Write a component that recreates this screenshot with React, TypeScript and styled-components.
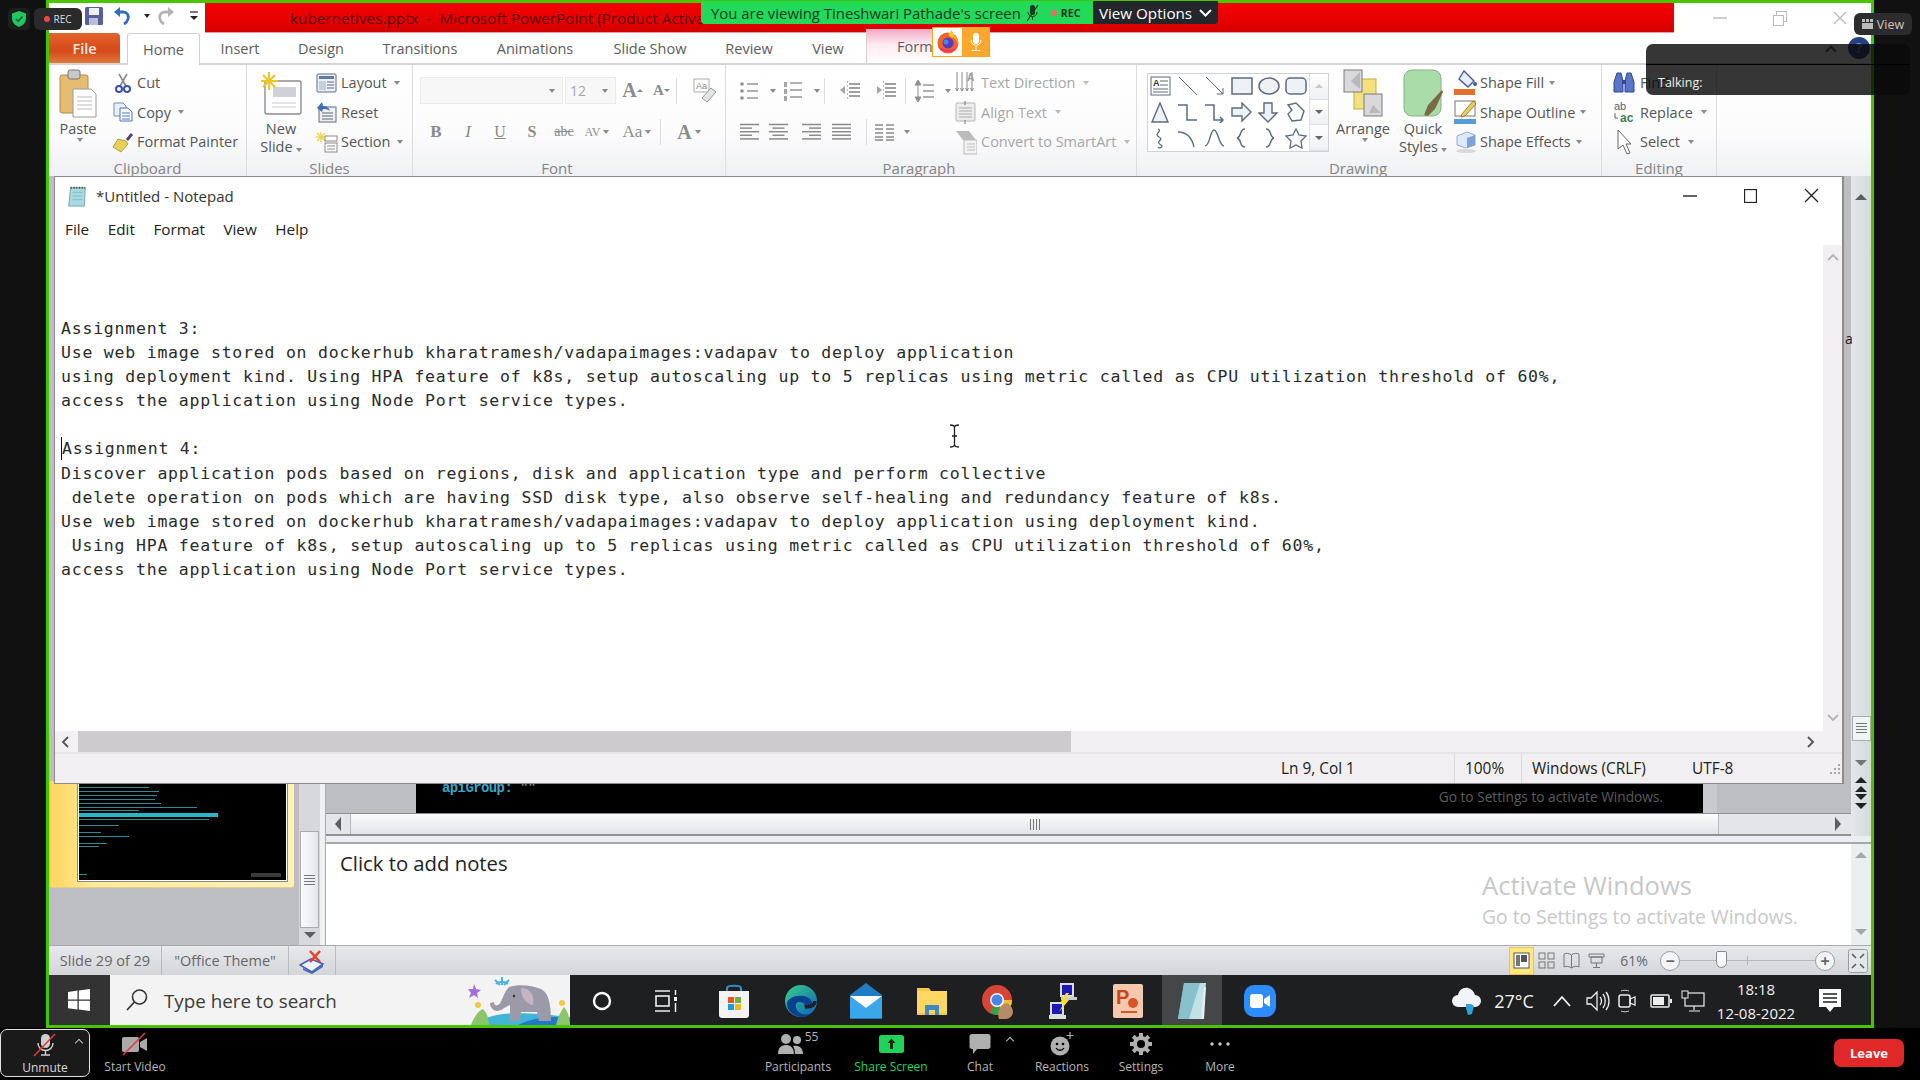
import React from 'react'
import styled, { createGlobalStyle } from 'styled-components'

const GlobalStyle = createGlobalStyle`
  html, body { margin: 0; padding: 0; background: #000; }
  * { box-sizing: border-box; }
  body { font-family: "Open Sans", "Liberation Sans", sans-serif; }
`

const UI_FONT = '"Open Sans", "Liberation Sans", sans-serif'

const Page = styled.div`
  position: relative;
  width: 1920px;
  height: 1080px;
  overflow: hidden;
  display: flex;
  flex-direction: column;
  background: #000;
  font-family: ${UI_FONT};
`

const Stage = styled.div`
  height: 1028px;
  padding: 0 46px;
  background: #111;
  display: flex;
`

const Shared = styled.div`
  position: relative;
  flex: 1;
  min-width: 0;
  border: 3px solid #48c400;
  display: flex;
  flex-direction: column;
  background: #fff;
`

/* powerpoint title bar */
const TitleBar = styled.div`
  height: 30px;
  display: flex;
  align-items: stretch;
  background: #fff;
`
const Qat = styled.div`
  width: 156px;
  display: flex;
  align-items: center;
  padding: 0 0 4px 36px;
`
const RedBar = styled.div`
  width: 1469px;
  padding: 0 0 0 85px;
  background: linear-gradient(#f40000, #e60000 60%, #d40000);
  color: #5c0000;
  font-size: 15.3px;
  white-space: pre;
  display: flex;
  align-items: center;
  border-bottom: 1px solid #e4a0a0;
`
const WinBtns = styled.div`
  flex: 1;
  display: flex;
  align-items: center;
  justify-content: flex-end;
  gap: 46px;
  padding-right: 24px;
`

/* ribbon tabs */
const TabStrip = styled.div`
  height: 32px;
  display: flex;
  align-items: stretch;
  border-bottom: 2px solid #d4d4d4;
  background: #fff;
`
const FileTab = styled.div`
  width: 71px;
  margin-right: 7px;
  background: linear-gradient(#e4622c, #d5491a 60%, #e27a3c);
  border-radius: 0 4px 0 0;
  color: #ffe9dc;
  font-size: 14.5px;
  font-weight: 600;
  display: flex;
  align-items: center;
  justify-content: center;
`
const Tab = styled.div<{ $w: number; $active?: boolean }>`
  width: ${(p) => p.$w}px;
  display: flex;
  align-items: center;
  justify-content: center;
  font-size: 14.5px;
  color: #5c5c5c;
  ${(p) =>
    p.$active &&
    `
    height: 32px;
    background: #fff;
    border: 1px solid #d0d0d0;
    border-bottom: 0;
    border-radius: 3px 3px 0 0;
  `}
`
const ContextTab = styled.div`
  width: 109px;
  margin-top: -4px;
  padding-left: 30px;
  display: flex;
  align-items: center;
  font-size: 14.5px;
  color: #5c5c5c;
  background: linear-gradient(#f3a9c4, #ffeaf2 45%, #fff);
  border-left: 1px solid #eec4d4;
`

/* ribbon */
const Ribbon = styled.div`
  height: 111px;
  display: flex;
  background: linear-gradient(#fff, #fcfcfd 60%, #eff0f3);
  color: #555;
  font-size: 14.5px;
`
const Group = styled.div<{ $w: number }>`
  width: ${(p) => p.$w}px;
  height: 111px;
  display: flex;
  flex-direction: column;
  border-right: 1px solid #dcdde0;
`
const GroupBody = styled.div<{ $pl?: number }>`
  flex: 1;
  display: flex;
  padding: 3px 0 0 ${(p) => p.$pl ?? 0}px;
  min-height: 0;
`
const GroupLabel = styled.div<{ $pr?: number }>`
  height: 17px;
  line-height: 18px;
  padding-right: ${(p) => p.$pr ?? 0}px;
  text-align: center;
  font-size: 15px;
  color: #858585;
`
const BigBtn = styled.div<{ $w: number }>`
  width: ${(p) => p.$w}px;
  display: flex;
  flex-direction: column;
  align-items: center;
  font-size: 14.5px;
  line-height: 18px;
  text-align: center;
  color: #555;
`
const BigIcon = styled.div`
  height: 51px;
  display: flex;
  align-items: center;
  justify-content: center;
  margin-bottom: 1px;
`
const SmallCol = styled.div<{ $ml?: number }>`
  margin-left: ${(p) => p.$ml ?? 0}px;
  display: flex;
  flex-direction: column;
`
const SmallRow = styled.div<{ $off?: boolean; $gap?: number }>`
  height: 29.5px;
  display: flex;
  align-items: center;
  gap: ${(p) => p.$gap ?? 4}px;
  white-space: nowrap;
  color: ${(p) => (p.$off ? '#a6a6a6' : '#555')};
`
const IconBox = styled.span<{ $w?: number }>`
  width: ${(p) => p.$w ?? 21}px;
  display: inline-flex;
  justify-content: center;
  align-items: center;
`
const Caret = styled.span<{ $c?: string }>`
  display: inline-block;
  width: 0;
  height: 0;
  margin-left: 3px;
  border-left: 3.5px solid transparent;
  border-right: 3.5px solid transparent;
  border-top: 4px solid ${(p) => p.$c ?? '#8a8a8a'};
`
const ToolStack = styled.div`
  display: flex;
  flex-direction: column;
`
const ToolRow = styled.div<{ $h: number }>`
  height: ${(p) => p.$h}px;
  display: flex;
  align-items: center;
`
const Slot = styled.span<{ $w: number }>`
  width: ${(p) => p.$w}px;
  display: inline-flex;
  align-items: center;
  justify-content: center;
  color: #8b8b8b;
`
const Sep = styled.span<{ $h?: number }>`
  width: 1px;
  height: ${(p) => p.$h ?? 26}px;
  background: #dcdde0;
`
const Combo = styled.div<{ $w: number }>`
  width: ${(p) => p.$w}px;
  height: 27px;
  margin-right: 2px;
  background: #f7f7f8;
  border: 1px solid #ebebed;
  display: flex;
  align-items: center;
  justify-content: flex-end;
  padding-right: 7px;
  color: #a5a5a5;
  font-size: 14px;
`
const ComboValue = styled.span`
  margin-right: auto;
  padding-left: 4px;
`
const FontGlyph = styled.span<{ $b?: boolean; $i?: boolean; $u?: boolean; $size?: number; $s?: boolean }>`
  font-family: "Liberation Serif", serif;
  font-weight: ${(p) => (p.$b ? 700 : 400)};
  font-style: ${(p) => (p.$i ? 'italic' : 'normal')};
  text-decoration: ${(p) => (p.$u ? 'underline' : p.$s ? 'line-through' : 'none')};
  font-size: ${(p) => p.$size ?? 15}px;
  color: #8b8b8b;
`
const Gallery = styled.div`
  width: 182px;
  height: 79px;
  margin: 5px 4px 0 10px;
  border: 1px solid #cfd2d8;
  background: #fff;
  display: flex;
`
const ShapeGrid = styled.div`
  flex: 1;
  display: grid;
  grid-template-columns: repeat(6, 1fr);
  grid-template-rows: repeat(3, 1fr);
  place-items: center;
`
const Spinner = styled.div`
  width: 19px;
  display: flex;
  flex-direction: column;
  border-left: 1px solid #dfe1e5;
`
const SpinCell = styled.div`
  flex: 1;
  display: flex;
  align-items: center;
  justify-content: center;
  background: linear-gradient(#fff, #eff0f3);
  border-bottom: 1px solid #dfe1e5;
`

/* slide pane + notes */
const Body = styled.div`
  flex: 1;
  min-height: 0;
  display: flex;
  background: #bdbec2;
`
const ThumbPane = styled.div`
  width: 271px;
  display: flex;
  align-items: flex-end;
`
const ThumbList = styled.div`
  flex: 1;
  padding: 0 0 57px 1px;
`
const ThumbHighlight = styled.div`
  width: 244px;
  height: 100%;
  padding: 0 7px 6px 28px;
  background: linear-gradient(90deg, #ffd65c, #ffe99b 18%, #fdf0bd);
  border-radius: 0 0 3px 3px;
  border-bottom: 1px solid #e2cf85;
`
const Thumb = styled.div`
  position: relative;
  width: 209px;
  height: 100px;
  padding-top: 4px;
  background: #000;
  border: 1px solid #fff;
  outline: 1px solid #8a8a80;
`
const ThumbLine = styled.div<{ $w: number; $mt: number; $bar?: boolean }>`
  width: ${(p) => p.$w}px;
  height: ${(p) => (p.$bar ? 4 : 1)}px;
  margin-top: ${(p) => p.$mt}px;
  background: ${(p) => (p.$bar ? '#2ab4c8' : '#2e8a92')};
`
const ThumbMark = styled.div`
  position: absolute;
  right: 5px;
  bottom: 3px;
  width: 30px;
  height: 4px;
  background: #3c3c3c;
`
const ThumbScroll = styled.div`
  width: 21px;
  height: 100%;
  margin-left: 4px;
  display: flex;
  flex-direction: column;
  justify-content: flex-end;
  align-items: center;
  padding: 0 1px 7px;
  background: #d6d8dc;
`
const ThumbGrip = styled.div`
  width: 19px;
  height: 97px;
  margin-bottom: 4px;
  border: 1px solid #a9abb0;
  background: linear-gradient(90deg, #fafbfc, #e4e6ea);
  display: flex;
  align-items: center;
  justify-content: center;
`
const Splitter = styled.div`
  width: 6px;
  background: #eef0f2;
  border-right: 1px solid #a8aaae;
`
const Main = styled.div`
  flex: 1;
  min-width: 0;
  display: flex;
  flex-direction: column;
`
const MainTop = styled.div`
  flex: 1;
  min-height: 0;
  display: flex;
`
const SlideCol = styled.div`
  flex: 1;
  min-width: 0;
  display: flex;
  flex-direction: column;
`
const SlideArea = styled.div`
  flex: 1;
  min-height: 0;
  display: flex;
  align-items: flex-end;
  padding-left: 90px;
  padding-right: 134px;
`
const SlideBlack = styled.div`
  position: relative;
  flex: 1;
  height: 100%;
  background: #000;
  border-right: 14px solid #c9cacd;
`
const ApiText = styled.div`
  position: absolute;
  left: 26px;
  bottom: 17px;
  font-family: "Liberation Mono", monospace;
  font-weight: 700;
  font-size: 14px;
  letter-spacing: -0.6px;
  color: #3aa6c8;
  white-space: pre;
`
const ApiQuote = styled.span`
  color: #8a8a8a;
`
const SlideWatermark = styled.div`
  position: absolute;
  right: 40px;
  bottom: 7px;
  font-size: 13.7px;
  color: #5d5d5d;
`
const SlideHScroll = styled.div`
  height: 23px;
  display: flex;
  align-items: center;
  background: #e3e5e9;
  border-top: 1px solid #8d8f93;
  border-bottom: 2px solid #8f9195;
`
const HThumb = styled.div`
  width: 1369px;
  flex: none;
  height: 100%;
  margin-left: 1px;
  background: linear-gradient(#fafbfc, #eceef1 55%, #e2e4e8);
  border-left: 1px solid #b8bac0;
  border-right: 1px solid #b8bac0;
  display: flex;
  align-items: center;
  justify-content: center;
`
const ArrowCell = styled.div<{ $w: number; $pl?: number }>`
  width: ${(p) => p.$w}px;
  flex: none;
  padding-left: ${(p) => p.$pl ?? 0}px;
  display: flex;
  justify-content: center;
  align-items: center;
`
const Grip = styled.div<{ $w: number; $h: number }>`
  width: ${(p) => p.$w}px;
  height: ${(p) => p.$h}px;
  background: repeating-linear-gradient(
    ${(p) => (p.$w > p.$h ? '180deg' : '90deg')},
    #777 0 1px,
    transparent 1px 3px
  );
`
const Tri = styled.span<{ $d: 'up' | 'down' | 'left' | 'right'; $c?: string; $s?: number }>`
  display: block;
  width: 0;
  height: 0;
  ${(p) => {
    const s = p.$s ?? 6
    const c = p.$c ?? '#5e5e5e'
    if (p.$d === 'up') return `border-left:${s}px solid transparent;border-right:${s}px solid transparent;border-bottom:${s}px solid ${c};`
    if (p.$d === 'down') return `border-left:${s}px solid transparent;border-right:${s}px solid transparent;border-top:${s}px solid ${c};`
    if (p.$d === 'left') return `border-top:${s + 1}px solid transparent;border-bottom:${s + 1}px solid transparent;border-right:${s}px solid ${c};`
    return `border-top:${s + 1}px solid transparent;border-bottom:${s + 1}px solid transparent;border-left:${s}px solid ${c};`
  }}
`
const VBar = styled.div`
  width: 20px;
  flex: none;
  display: flex;
  flex-direction: column;
  align-items: center;
  justify-content: flex-end;
  background: linear-gradient(90deg, #e4e6ea, #d7d9de);
`
const VTopArrow = styled.div`
  margin: 18px 0 auto;
`
const VDownCell = styled.div`
  margin-bottom: 11px;
`
const VBarStack = styled.div`
  display: flex;
  flex-direction: column;
  align-items: center;
  gap: 2.7px;
  margin-bottom: 27px;
`
const VGrip = styled.div`
  width: 19px;
  height: 25px;
  margin-bottom: 19px;
  border: 1px solid #a9abb0;
  background: #f2f3f5;
  display: flex;
  align-items: center;
  justify-content: center;
`
const NotesRow = styled.div`
  height: 109px;
  padding-top: 6px;
  display: flex;
  background: #eceef1;
`
const Notes = styled.div`
  position: relative;
  flex: 1;
  padding: 4px 0 0 14px;
  background: #fff;
  border-top: 2px solid #a4a6aa;
  font-size: 20.3px;
  line-height: 30px;
  color: #222;
`
const NotesBar = styled(VBar)`
  justify-content: space-between;
  padding: 8px 0 10px;
  background: #eceef1;
  border-top: 2px solid #a4a6aa;
`
const Activate = styled.div`
  position: absolute;
  left: 1156px;
  top: 24px;
  color: #c8c8c8;
`
const ActivateTitle = styled.div`
  font-size: 25.6px;
  line-height: 36px;
`
const ActivateSub = styled.div`
  font-size: 19.3px;
  line-height: 26px;
`

/* powerpoint status */
const PptStatus = styled.div`
  height: 30px;
  display: flex;
  align-items: stretch;
  background: linear-gradient(#e8e9ec, #d3d5d9);
  border-top: 1px solid #a8aaae;
  font-size: 14.5px;
  color: #666;
`
const PptCell = styled.div<{ $w: number }>`
  width: ${(p) => p.$w}px;
  display: flex;
  align-items: center;
  justify-content: center;
  border-right: 1px solid #b9bbbf;
`
const PptRight = styled.div`
  margin-left: auto;
  display: flex;
  align-items: center;
  padding-right: 1px;
`
const ViewBtn = styled.div<{ $on?: boolean }>`
  width: 25px;
  height: 28px;
  display: flex;
  align-items: center;
  justify-content: center;
  ${(p) => p.$on && 'background:#ffe97f;border:1px solid #e9c64d;'}
`
const FitBtn = styled(ViewBtn)`
  margin-left: 10px;
`
const ZoomPct = styled.span`
  width: 46px;
  margin: 0 3px 0 2px;
  text-align: center;
  font-size: 14px;
`
const ZoomBtn = styled.span`
  width: 20px;
  height: 20px;
  border-radius: 50%;
  border: 1px solid #9a9ca0;
  background: #f4f5f6;
  display: flex;
  align-items: center;
  justify-content: center;
  font-size: 16px;
  font-weight: 700;
  line-height: 1;
  color: #666;
`
const ZoomTrack = styled.span`
  position: relative;
  width: 135px;
  height: 1px;
  background: #b4b6ba;
`
const ZoomKnob = styled.span`
  position: absolute;
  left: 36px;
  top: -9px;
  width: 11px;
  height: 17px;
  background: #f8f9fa;
  border: 1px solid #85878b;
  border-radius: 2px 2px 6px 6px;
`
const ZoomTick = styled.span`
  position: absolute;
  left: 67px;
  top: -4px;
  width: 1px;
  height: 9px;
  background: #b4b6ba;
`

/* windows taskbar */
const Taskbar = styled.div`
  height: 50px;
  display: flex;
  align-items: stretch;
  background: #1e1f20;
  color: #f2f2f2;
`
const StartBtn = styled.div`
  width: 61px;
  padding-right: 2px;
  background: #333;
  display: flex;
  align-items: center;
  justify-content: center;
`
const SearchBox = styled.div`
  width: 460px;
  background: #f3f3f3;
  display: flex;
  align-items: center;
  padding-left: 15px;
  gap: 15px;
  font-size: 18.8px;
  color: #3d3d3d;
  position: relative;
`
const SearchLabel = styled.span`
  padding-top: 2px;
`
const SearchArt = styled.div`
  margin-left: auto;
  height: 100%;
`
const TaskSlot = styled.div<{ $w: number; $active?: boolean }>`
  width: ${(p) => p.$w}px;
  padding-top: 2px;
  display: flex;
  align-items: center;
  justify-content: center;
  ${(p) => p.$active && 'background:#454647;'}
`
const Tray = styled.div`
  margin-left: auto;
  display: flex;
  align-items: stretch;
  padding-right: 15px;
`
const TempText = styled.span`
  font-size: 18px;
`
const Clock = styled.div`
  display: flex;
  flex-direction: column;
  align-items: center;
  gap: 6px;
  font-size: 15px;
  line-height: 18px;
`

/* notepad */
const Notepad = styled.div`
  position: absolute;
  left: 5px;
  top: 173px;
  width: 1790px;
  height: 608px;
  background: #fff;
  border: 1px solid #8c8c8c;
  border-width: 1px 2px 1px 1px;
  display: flex;
  flex-direction: column;
  color: #222;
`
const NoteTitle = styled.div`
  height: 35px;
  padding: 2px 0 0 11px;
  display: flex;
  align-items: center;
  gap: 8px;
  font-size: 15px;
  color: #333;
`
const NoteCtrls = styled.div`
  margin-left: auto;
  display: flex;
  align-items: center;
`
const NoteCtrl = styled.span`
  width: 61px;
  display: flex;
  justify-content: center;
  align-items: center;
`
const NoteMenu = styled.div`
  height: 33px;
  display: flex;
  align-items: center;
  padding-left: 10px;
  gap: 18.5px;
  font-size: 15.3px;
`
const EditorRow = styled.div`
  flex: 1;
  min-height: 0;
  display: flex;
`
const Editor = styled.div`
  position: relative;
  flex: 1;
  padding: 72px 0 0 6px;
  font-family: "DejaVu Sans Mono", "Liberation Mono", monospace;
  font-size: 16.5px;
  letter-spacing: 0.775px;
  color: #2a2a2a;
`
const Line = styled.div`
  height: 24.1px;
  line-height: 24.1px;
  white-space: pre;
`
const TextCaret = styled.span`
  display: inline-block;
  width: 0;
  height: 23px;
  vertical-align: -6px;
  border-left: 1px solid #111;
`
const IBeam = styled.div`
  position: absolute;
  left: 894px;
  top: 179px;
  line-height: 0;
`
const NoteVBar = styled.div`
  width: 19px;
  display: flex;
  flex-direction: column;
  justify-content: space-between;
  align-items: center;
  padding: 8px 0 6px;
  background: #f2f0f2;
`
const NoteHBar = styled.div`
  height: 21px;
  display: flex;
  align-items: stretch;
  background: #f2f0f2;
`
const NoteHThumb = styled.div`
  width: 993px;
  flex: none;
  background: #cdcbce;
`
const NoteHSpacer = styled.div`
  width: 735px;
  flex: none;
`
const NoteStatus = styled.div`
  height: 31px;
  display: flex;
  align-items: center;
  padding-left: 1226px;
  background: #f1eff1;
  border-top: 2px solid #e6e4e6;
  font-size: 15.4px;
`
const NoteCell = styled.div<{ $w: number; $sep?: boolean }>`
  width: ${(p) => p.$w}px;
  height: 100%;
  display: flex;
  align-items: center;
  padding-left: ${(p) => (p.$sep ? 10 : 0)}px;
  ${(p) => p.$sep && 'border-left:1px solid #dcdadc;'}
`
const SizeGrip = styled.div`
  margin-left: auto;
  margin-right: 1px;
  line-height: 0;
`

/* zoom toolbar */
const Toolbar = styled.div`
  height: 52px;
  display: flex;
  align-items: stretch;
  background: #000;
  color: #b5b5b5;
  font-size: 12px;
`
const ToolItem = styled.div<{ $w: number; $c?: string }>`
  position: relative;
  width: ${(p) => p.$w}px;
  display: flex;
  flex-direction: column;
  align-items: center;
  padding-top: 4px;
  color: ${(p) => p.$c ?? '#b5b5b5'};
`
const MuteItem = styled(ToolItem)`
  height: 48px;
  margin-top: 1px;
  padding-top: 3px;
  border: 1px solid #e2e2e2;
  border-radius: 7px;
  background: #1a1a1a;
  color: #d8d8d8;
`
const ToolIcon = styled.div`
  height: 24px;
  display: flex;
  align-items: center;
  justify-content: center;
  margin-bottom: 3px;
`
const ToolLabel = styled.div`
  line-height: 16px;
  white-space: nowrap;
`
const Chevron = styled.span<{ $r: number }>`
  position: absolute;
  right: ${(p) => p.$r}px;
  top: 10px;
  width: 6px;
  height: 6px;
  border-left: 1.5px solid #bbb;
  border-top: 1.5px solid #bbb;
  transform: rotate(45deg);
`
const ParticipantCount = styled.span`
  align-self: flex-start;
  margin: -2px 0 0 1px;
  font-size: 12px;
  line-height: 14px;
  color: #b5b5b5;
`
const CenterGroup = styled.div`
  margin-left: 572px;
  display: flex;
`
const LeaveBtn = styled.div`
  align-self: center;
  margin: -2px 16px 0 auto;
  width: 70px;
  height: 28px;
  border-radius: 7px;
  background: #e02828;
  color: #fff;
  font-size: 13px;
  font-weight: 700;
  display: flex;
  align-items: center;
  justify-content: center;
`

/* zoom overlays */
const ShieldChip = styled.div`
  position: absolute;
  left: 8px;
  top: 8px;
  width: 22px;
  height: 22px;
  border-radius: 5px;
  background: #1e1e1e;
  display: flex;
  align-items: center;
  justify-content: center;
`
const RecChip = styled.div`
  position: absolute;
  left: 34px;
  top: 8px;
  width: 48px;
  height: 22px;
  border-radius: 6px;
  background: #2a2a2a;
  display: flex;
  align-items: center;
  justify-content: center;
  gap: 3px;
  font-size: 10px;
  color: #ddd;
`
const RecDot = styled.span<{ $c: string }>`
  width: 6px;
  height: 6px;
  border-radius: 50%;
  background: ${(p) => p.$c};
`
const Banner = styled.div`
  position: absolute;
  left: 701px;
  top: 1px;
  display: flex;
  height: 23px;
`
const BannerText = styled.div`
  width: 392px;
  padding-left: 10px;
  display: flex;
  align-items: center;
  gap: 6px;
  background: #22d95a;
  border-radius: 0 0 0 4px;
  color: #173a24;
  font-size: 14.9px;
  white-space: nowrap;
`
const RecTag = styled.span`
  display: flex;
  align-items: center;
  gap: 4px;
  margin-left: 6px;
  font-size: 10.5px;
  font-weight: 700;
`
const ViewOptions = styled.div`
  width: 125px;
  display: flex;
  align-items: center;
  justify-content: center;
  gap: 7px;
  background: #23262a;
  border-radius: 0 0 4px 0;
  color: #fff;
  font-size: 15.2px;
`
const CaptureBadge = styled.div`
  position: absolute;
  left: 932px;
  top: 27px;
  display: flex;
  height: 30px;
  border: 1px solid #f5a623;
`
const FoxCell = styled.div`
  width: 29px;
  background: #fff;
  display: flex;
  align-items: center;
  justify-content: center;
`
const MicCell = styled.div`
  width: 27px;
  background: #fba82d;
  display: flex;
  align-items: center;
  justify-content: center;
`
const ViewChip = styled.div`
  position: absolute;
  left: 1854px;
  top: 13px;
  width: 58px;
  height: 22px;
  border-radius: 6px;
  background: #2c2c2c;
  color: #c8c8c8;
  font-size: 12.5px;
  display: flex;
  align-items: center;
  justify-content: center;
  gap: 4px;
`
const TalkingPanel = styled.div`
  position: absolute;
  left: 1646px;
  top: 44px;
  width: 264px;
  height: 51px;
  border-radius: 7px;
  background: rgba(10, 10, 10, 0.82);
  color: #eee;
  font-size: 12.5px;
  padding: 31px 0 0 12px;
  line-height: 16px;
`
const TalkDivider = styled.div`
  position: absolute;
  left: 0;
  right: 0;
  top: 20px;
  height: 1px;
  background: #000;
`
const HelpDot = styled.div`
  position: absolute;
  left: 1848px;
  top: 37px;
  width: 22px;
  height: 22px;
  border-radius: 50%;
  background: #23417e;
  color: #6d8fc8;
  font-size: 14px;
  font-weight: 700;
  text-align: center;
  line-height: 22px;
`
const RibbonCollapse = styled.span`
  position: absolute;
  left: 1827px;
  top: 47px;
  width: 8px;
  height: 8px;
  border-left: 2px solid #555;
  border-top: 2px solid #555;
  transform: rotate(45deg);
`
const EdgeGlyph = styled.div`
  position: absolute;
  left: 1845px;
  top: 329px;
  font-size: 14px;
  color: #222;
`

/* ---------- drawings ---------- */

const Svg = ({ w, h, vb, children }: { w: number; h: number; vb?: string; children: React.ReactNode }) => (
  <svg width={w} height={h} viewBox={vb ?? `0 0 ${w} ${h}`} style={{ display: 'block', flex: 'none' }}>
    {children}
  </svg>
)

const lines = (x1: number, x2: number, ys: number[], c = '#8f8f8f', sw = 1.4) =>
  ys.map((y, i) => <line key={i} x1={x1} x2={x2} y1={y} y2={y} stroke={c} strokeWidth={sw} />)

const PasteIcon = () => (
  <Svg w={38} h={50}>
    <rect x="1" y="6" width="28" height="38" rx="2" fill="#e6bb72" stroke="#b58a45" />
    <rect x="9" y="1" width="12" height="9" rx="2" fill="#c8c8c8" stroke="#777" />
    <path d="M14 20h18l5 5v23H14z" fill="#fff" stroke="#9a9a9a" />
    {lines(18, 33, [28, 32, 36, 40], '#bbb', 1)}
  </Svg>
)
const CutIcon = () => (
  <Svg w={16} h={20}>
    <path d="M4 1l7 12M12 1L5 13" stroke="#8a8a8a" strokeWidth="1.6" />
    <circle cx="4" cy="16" r="3" fill="none" stroke="#3a52a8" strokeWidth="2" />
    <circle cx="12" cy="16" r="3" fill="none" stroke="#3a52a8" strokeWidth="2" />
  </Svg>
)
const CopyIcon = () => (
  <Svg w={20} h={20}>
    <path d="M1 1h9l3 3v10H1z" fill="#e9f0fa" stroke="#6d8fc0" />
    <path d="M7 6h8l4 4v9H7z" fill="#fff" stroke="#4a72b4" />
    {lines(9, 17, [11, 14, 17], '#4a72b4', 1)}
  </Svg>
)
const PainterIcon = () => (
  <Svg w={22} h={22}>
    <path d="M14 8l5-6 2 2-5 6z" fill="#4a3f7a" />
    <path d="M6 8l8 2 2 3-7 8-8-5z" fill="#e8cf55" stroke="#a48e2e" strokeWidth="0.8" />
  </Svg>
)
const NewSlideIcon = () => (
  <Svg w={42} h={46}>
    <rect x="5" y="10" width="36" height="33" rx="2" fill="#fff" stroke="#8a8d92" strokeWidth="1.4" />
    <rect x="13" y="16" width="23" height="10" fill="#cfd1d6" />
    {lines(12, 36, [32, 36], '#c8cace', 1)}
    <path d="M9 1v18M1 10h17M3 4l12 12M15 4L3 16" stroke="#f0c52c" strokeWidth="2" />
  </Svg>
)
const LayoutIcon = () => (
  <Svg w={21} h={20}>
    <rect x="1" y="1" width="19" height="18" rx="1" fill="#eef0f4" stroke="#5f6b80" />
    <rect x="3" y="3" width="15" height="3" fill="#5f7ba5" />
    <rect x="3" y="8" width="7" height="9" fill="#c6cfdc" />
    {lines(11, 18, [9, 12, 15], '#5f6b80', 1)}
  </Svg>
)
const ResetIcon = () => (
  <Svg w={21} h={22}>
    <rect x="3" y="6" width="17" height="15" fill="#eef0f4" stroke="#5f6b80" />
    {lines(6, 17, [12, 15, 18], '#5f6b80', 1)}
    <path d="M1 7l5-6 1 4c4 0 6 2 7 5-3-2-5-2-7-2l-1 3z" fill="#3f6fb5" />
  </Svg>
)
const SectionIcon = () => (
  <Svg w={22} h={22}>
    <path d="M5 1v10M0 6h10M1 2l8 8M9 2l-8 8" stroke="#f0d44c" strokeWidth="1.4" />
    <rect x="9" y="5" width="12" height="5" fill="#fff" stroke="#8a8a8a" />
    <rect x="9" y="12" width="12" height="9" fill="#fff" stroke="#8a8a8a" />
    {lines(11, 19, [15, 18], '#8a8a8a', 1)}
  </Svg>
)
const GrowA = ({ up }: { up: boolean }) => (
  <Slot $w={29}>
    <FontGlyph $b $size={up ? 20 : 15}>A</FontGlyph>
    <Tri $d={up ? 'up' : 'down'} $c="#8b8b8b" $s={3} />
  </Slot>
)
const EraserIcon = () => (
  <Svg w={24} h={26}>
    <rect x="1" y="1" width="15" height="13" fill="#fff" stroke="#aaa" />
    <text x="3" y="11" fontSize="9" fill="#8a8a8a" fontFamily="Liberation Sans">Aa</text>
    <path d="M9 20l9-10 5 4-9 10z" fill="#e3e4e8" stroke="#9a9a9a" />
  </Svg>
)
const BulletIcon = () => (
  <Svg w={20} h={20}>
    {[3, 10, 17].map((y) => <circle key={y} cx="3" cy={y} r="1.8" fill="#8f8f8f" />)}
    {lines(8, 19, [3, 10, 17])}
  </Svg>
)
const NumberIcon = () => (
  <Svg w={20} h={22}>
    {[4, 11, 18].map((y) => <rect key={y} x="1" y={y - 2} width="3" height="5" fill="#a5a5a5" />)}
    {lines(7, 19, [3, 10, 17])}
  </Svg>
)
const IndentIcon = ({ out }: { out?: boolean }) => (
  <Svg w={22} h={22}>
    {lines(10, 21, [4, 8, 12, 16], '#888', 1.6)}
    <path d={out ? 'M1 10l5-4v8z' : 'M7 10L2 6v8z'} fill="#a5a5a5" />
    <line x1="8.500" x2="8.500" y1="1" y2="21" stroke="#bbb" strokeDasharray="2 2" />
  </Svg>
)
const SpacingIcon = () => (
  <Svg w={20} h={24}>
    <path d="M4 1l3 5H1zM4 23l3-5H1zM4 6v12" fill="#8f8f8f" stroke="#8f8f8f" />
    {lines(9, 20, [6, 12, 18])}
  </Svg>
)
const AlignIcon = ({ kind }: { kind: 'l' | 'c' | 'r' | 'j' }) => {
  const rows = [0, 1, 2, 3, 4]
  return (
    <Svg w={20} h={18}>
      {rows.map((i) => {
        const len = kind === 'j' || i % 2 === 0 ? 19 : 12
        const x = kind === 'l' || kind === 'j' ? 0 : kind === 'r' ? 19 - len : (19 - len) / 2
        return <line key={i} x1={x} x2={x + len} y1={1.5 + i * 3.6} y2={1.5 + i * 3.6} stroke="#8a8a8a" strokeWidth="1.5" />
      })}
    </Svg>
  )
}
const ColumnsIcon = () => (
  <Svg w={19} h={18}>
    {lines(0, 8, [2, 6, 10, 14, 17], '#8a8a8a', 1.5)}
    {lines(11, 19, [2, 6, 10, 14, 17], '#8a8a8a', 1.5)}
  </Svg>
)
const TextDirIcon = () => (
  <Svg w={21} h={24}>
    {[2, 7, 12, 17].map((x) => <path key={x} d={`M${x} 1v19l-1.5-3M${x} 20l1.5-3`} stroke="#8a8a8a" fill="none" />)}
    <text x="12" y="10" fontSize="10" fill="#999" fontFamily="Liberation Sans" fontWeight="700">A</text>
  </Svg>
)
const AlignTextIcon = () => (
  <Svg w={21} h={24}>
    <rect x="1" y="3" width="19" height="18" rx="1" fill="#ededee" stroke="#b5b5b5" />
    {lines(4, 17, [8, 11, 14, 17], '#aaa', 1)}
    <path d="M10 1v4M10 20v4" stroke="#777" />
  </Svg>
)
const SmartArtIcon = () => (
  <Svg w={22} h={26}>
    <path d="M1 2h13l7 9H8z" fill="#bcbcbc" />
    <rect x="9" y="11" width="13" height="14" fill="#f3f3f3" stroke="#bbb" />
    {lines(12, 20, [15, 18, 21], '#bbb', 1)}
  </Svg>
)

const Shape = ({ i }: { i: number }) => {
  const s = '#5d6b7d'
  const fill = '#eef1f5'
  const d: Record<number, React.ReactNode> = {
    0: (
      <>
        <rect x="1" y="1" width="19" height="18" fill="#fff" stroke={s} />
        <text x="3" y="10" fontSize="9" fontWeight="700" fill="#333" fontFamily="Liberation Sans">A</text>
        {lines(10, 18, [5, 9], s, 1)}
        {lines(3, 18, [13, 16], s, 1)}
      </>
    ),
    1: <line x1="2" y1="1" x2="20" y2="19" stroke={s} />,
    2: <path d="M2 1l17 17M19 12v6h-6" stroke={s} fill="none" />,
    3: <rect x="1" y="2" width="20" height="16" fill={fill} stroke={s} strokeWidth="1.5" />,
    4: <ellipse cx="11" cy="10" rx="10" ry="8" fill={fill} stroke={s} strokeWidth="1.5" />,
    5: <rect x="1" y="2" width="20" height="16" rx="4" fill={fill} stroke={s} strokeWidth="1.5" />,
    6: <path d="M10 1l8 19H2z" fill={fill} stroke={s} strokeWidth="1.4" />,
    7: <path d="M1 3h9v15h10" stroke={s} fill="none" strokeWidth="1.5" />,
    8: <path d="M1 3h9v15h8M16 15l3 3-3 3" stroke={s} fill="none" strokeWidth="1.5" />,
    9: <path d="M1 6h10V1l9 9-9 9v-5H1z" fill={fill} stroke={s} strokeWidth="1.4" />,
    10: <path d="M6 1h8v10h5l-9 9-9-9h5z" fill={fill} stroke={s} strokeWidth="1.4" />,
    11: <path d="M3 3l8-2 8 8-3 9-9 1-4-7 4-4z" fill="#fff" stroke={s} strokeWidth="1.4" />,
    12: <path d="M8 1c5 2-5 5 1 8s-5 4 2 8c3 2-2 4-3 2" fill="none" stroke={s} strokeWidth="1.3" />,
    13: <path d="M1 4c9 0 14 6 16 15" fill="none" stroke={s} strokeWidth="1.4" />,
    14: <path d="M1 18C6 18 6 2 10 2s5 16 10 16" fill="none" stroke={s} strokeWidth="1.4" />,
    15: <path d="M14 1c-6 0-3 8-8 9 5 1 2 9 8 9" fill="none" stroke={s} strokeWidth="1.4" />,
    16: <path d="M8 1c6 0 3 8 8 9-5 1-2 9-8 9" fill="none" stroke={s} strokeWidth="1.4" />,
    17: <path d="M11 1l3 6 7 1-5 5 1 7-6-3-6 3 1-7-5-5 7-1z" fill="#fff" stroke={s} strokeWidth="1.3" />,
  }
  return <Svg w={22} h={21}>{d[i]}</Svg>
}

const ArrangeIcon = () => (
  <Svg w={42} h={50}>
    <rect x="12" y="10" width="22" height="30" fill="#f3e07f" stroke="#c7ab3e" />
    <rect x="2" y="1" width="18" height="22" fill="#d9d9dc" stroke="#7a7a7a" />
    <path d="M9 12l9-9v17z" fill="#b9b9bd" />
    <rect x="22" y="25" width="18" height="22" fill="#d9d9dc" stroke="#7a7a7a" />
    <path d="M31 36l8 8H27z" fill="#b9b9bd" />
  </Svg>
)
const QuickStyleIcon = () => (
  <Svg w={42} h={50}>
    <rect x="2" y="1" width="37" height="46" rx="8" fill="#a9dca9" stroke="#8ab08a" />
    <path d="M22 46l4-10 14-15 1 2-8 17-7 7z" fill="#7b6a42" />
  </Svg>
)
const ShapeFillIcon = () => (
  <Svg w={24} h={26}>
    <path d="M10 1l10 10-6 6-9-8z" fill="#e8edf6" stroke="#3f5ea6" strokeWidth="1.4" />
    <circle cx="21" cy="14" r="2" fill="#3f5ea6" />
    <rect x="0" y="19" width="21" height="6" fill="#e2702c" />
  </Svg>
)
const ShapeOutlineIcon = () => (
  <Svg w={24} h={26}>
    <rect x="1" y="2" width="20" height="15" fill="#fff" stroke="#777" />
    <path d="M8 15L19 2l3 3-11 12-4 1z" fill="#e8cf55" stroke="#8a6a2c" strokeWidth="0.8" />
    <rect x="0" y="20" width="22" height="5" fill="#5b9bd5" />
  </Svg>
)
const ShapeEffectsIcon = () => (
  <Svg w={24} h={26}>
    <path d="M3 7l10-4 8 3v10l-9 3-9-3z" fill="#dfe8f7" stroke="#9aa9c4" />
    <path d="M13 9l8-3v10l-8 3z" fill="#7da2dc" />
    <ellipse cx="12" cy="22" rx="10" ry="2" fill="#d6d8dc" />
  </Svg>
)
const BinocularsIcon = () => (
  <Svg w={22} h={22}>
    <path d="M4 1h4l2 8v11H1V10zM14 1h4l3 9v10h-9V9z" fill="#5a74c6" stroke="#2f4796" />
    <rect x="9" y="8" width="4" height="4" fill="#2f4796" />
  </Svg>
)
const ReplaceIcon = () => (
  <Svg w={22} h={24}>
    <text x="1" y="10" fontSize="11" fill="#5a6472" fontFamily="Liberation Sans">ab</text>
    <path d="M2 13v5h3" stroke="#5a6472" fill="none" />
    <text x="7" y="22" fontSize="12" fill="#3a7f55" fontWeight="700" fontFamily="Liberation Sans">ac</text>
  </Svg>
)
const CursorIcon = () => (
  <Svg w={16} h={26}>
    <path d="M2 1v19l5-4 4 9 3-1-4-9h5z" fill="#fff" stroke="#666" />
  </Svg>
)
const Minus = ({ c, w }: { c: string; w: number }) => (
  <Svg w={w} h={12}><line x1="0" x2={w} y1="6" y2="6" stroke={c} strokeWidth="1.4" /></Svg>
)
const Cross = ({ c, s, sw }: { c: string; s: number; sw: number }) => (
  <Svg w={s} h={s}>
    <path d={`M1 1L${s - 1} ${s - 1}M${s - 1} 1L1 ${s - 1}`} stroke={c} strokeWidth={sw} />
  </Svg>
)
const NotepadIcon = ({ s }: { s: number }) => (
  <Svg w={s} h={s} vb="0 0 24 24">
    <path d="M5 3h16l-1 20H3z" fill="#a7dbe4" stroke="#7d9a9f" />
    <path d="M5 3h16" stroke="#555" strokeWidth="2" strokeDasharray="1.5 1.5" />
    {lines(7, 18, [8, 12, 16], '#7fb8c4', 1)}
  </Svg>
)
const WinLogo = () => (
  <Svg w={22} h={22}>
    <path d="M0 3l9.5-1.4V10.5H0zM10.8 1.4L22 0v10.5H10.8zM0 11.7h9.5v8.9L0 19.2zM10.8 11.7H22V22l-11.2-1.6z" fill="#fff" />
  </Svg>
)
const SearchGlass = () => (
  <Svg w={24} h={24}>
    <circle cx="14.5" cy="9" r="7" fill="none" stroke="#333" strokeWidth="1.6" />
    <line x1="9.5" y1="14" x2="2" y2="22" stroke="#333" strokeWidth="1.8" />
  </Svg>
)
const Elephant = () => (
  <Svg w={102} h={50}>
    <path d="M10 50c10-14 40-14 92-8v8z" fill="#43b4d8" />
    <path d="M50 50c16-8 36-10 52-6v6z" fill="#1f78c8" />
    <path d="M3 50c3-8 7-14 12-16 4 4 6 10 6 16zM88 50c2-8 5-14 8-18 4 4 6 12 6 18z" fill="#8bc76a" />
    <circle cx="10" cy="30" r="3" fill="#f2c84b" />
    <circle cx="94" cy="28" r="3" fill="#f2c84b" />
    <path d="M6 9l2 5 5 1-4 3 1 5-4-3-5 3 2-5-3-4h5z" fill="#a66be0" />
    <path d="M28 9c3-3 9-3 12 0M34 2v8M27 5l5 5M41 5l-5 5" stroke="#4fb2dc" strokeWidth="2" fill="none" />
    <path d="M41 12c10-3 22-2 32 2 8 4 10 16 10 32H71l-2-9H53l-1 9H42V30c-5 2-9 6-13 6-4 0-7-4-7-8l4-1c0 3 2 4 4 3 4-2 5-12 11-18z" fill="#9c9aa8" />
    <path d="M53 13c8 0 14 6 12 17-6-1-12-6-12-17z" fill="#c4b4c4" />
    <circle cx="46" cy="21" r="1.2" fill="#333" />
  </Svg>
)
const CircleO = () => (
  <Svg w={20} h={20}><circle cx="10" cy="10" r="8" fill="none" stroke="#fff" strokeWidth="2.4" /></Svg>
)
const TaskView = () => (
  <Svg w={24} h={24}>
    <path d="M1 2h15M1 22h15" stroke="#eee" strokeWidth="1.6" />
    <rect x="2" y="7" width="13" height="10" fill="none" stroke="#eee" strokeWidth="1.6" />
    <rect x="20" y="8" width="3" height="4" fill="#eee" />
    <path d="M21.5 1v5M21.5 14v9" stroke="#eee" strokeWidth="1.5" />
  </Svg>
)
const StoreIcon = () => (
  <Svg w={32} h={34}>
    <path d="M9 8V4c0-3 14-3 14 0v4" fill="none" stroke="#2e8fc0" strokeWidth="2.2" />
    <path d="M1 7h30v24c0 2-1 3-3 3H4c-2 0-3-1-3-3z" fill="#f3f3f3" />
    <rect x="10" y="13" width="6" height="6" fill="#e8532c" />
    <rect x="17" y="13" width="6" height="6" fill="#6cb33f" />
    <rect x="10" y="20" width="6" height="6" fill="#1e9ce0" />
    <rect x="17" y="20" width="6" height="6" fill="#f5b81f" />
  </Svg>
)
const EdgeIcon = () => (
  <Svg w={34} h={34}>
    <defs>
      <linearGradient id="edgeG" x1="0" y1="0" x2="1" y2="1">
        <stop offset="0" stopColor="#39d08a" />
        <stop offset="1" stopColor="#0c62b8" />
      </linearGradient>
    </defs>
    <circle cx="17" cy="17" r="16" fill="url(#edgeG)" />
    <path d="M3 20C3 11 24 8 28 18c1 4-3 5-8 5 1-2 1-5-5-5-5 0-4 8 1 11 6 3 10 1 12-1-3 5-10 6-15 4C8 30 3 26 3 20z" fill="#0b3f90" />
    <path d="M21 23c5 0 10-1 10-6" stroke="#1e1f20" strokeWidth="3.5" fill="none" />
  </Svg>
)
const MailIcon = () => (
  <Svg w={34} h={36}>
    <path d="M17 0L33 12v24H1V12z" fill="#1f7bc4" />
    <path d="M1 13l16 12 16-12v22H1z" fill="#3ba6e8" />
    <path d="M1 13h32L17 25z" fill="#fff" />
  </Svg>
)
const FolderIcon = () => (
  <Svg w={30} h={30}>
    <path d="M0 2h12l2 3h16v24H0z" fill="#f5c84c" />
    <rect x="0" y="5" width="30" height="22" fill="#ffd863" />
    <path d="M8 29V19h14v10h-4v-5h-6v5z" fill="#3f87c6" />
  </Svg>
)
const ChromeIcon = () => (
  <Svg w={34} h={36}>
    <circle cx="16" cy="17" r="15" fill="#d84436" />
    <path d="M16 17L29 25A15 15 0 0 1 9 30z" fill="#38a04c" />
    <path d="M16 17h15A15 15 0 0 1 29 25L22 31z" fill="#f2c230" />
    <circle cx="16" cy="17" r="7" fill="#fff" />
    <circle cx="16" cy="17" r="5.5" fill="#4a86e8" />
    <path d="M18 36c-2-6 0-12 5-15 4-3 9 3 9 8 0 4-4 7-7 7z" fill="#b98a66" />
  </Svg>
)
const PuttyIcon = () => (
  <Svg w={30} h={36}>
    <rect x="13" y="1" width="12" height="12" fill="#1a1ab8" stroke="#ddd" strokeWidth="2" />
    <rect x="13" y="14" width="16" height="3" fill="#ccc" />
    <rect x="3" y="20" width="12" height="12" fill="#1a1ab8" stroke="#ddd" strokeWidth="2" />
    <rect x="1" y="32" width="17" height="4" fill="#ddd" />
    <path d="M18 10l-6 10h4l-5 9 10-12h-4l4-7z" fill="#f5e11f" />
  </Svg>
)
const PptIcon = () => (
  <Svg w={30} h={36}>
    <rect x="0" y="1" width="30" height="34" rx="2" fill="#f4c8ac" />
    <text x="3" y="21" fontSize="20" fontWeight="700" fill="#c8451e" fontFamily="Liberation Sans">P</text>
    <circle cx="20" cy="20" r="5" fill="#d8552c" />
    <rect x="8" y="28" width="16" height="2" fill="#d8552c" />
  </Svg>
)
const NotepadTask = () => (
  <Svg w={30} h={36}>
    <path d="M7 0h22l-3 36H1z" fill="#c3e0e4" />
    <path d="M7 0h16L12 36H1z" fill="#6fb4c4" opacity="0.7" />
    <path d="M27 4l-3 32h3l2-32z" fill="#e9eef0" />
  </Svg>
)
const ZoomApp = () => (
  <Svg w={32} h={36}>
    <rect x="0" y="2" width="32" height="32" rx="10" fill="#2d8cff" />
    <rect x="6" y="11" width="13" height="14" rx="3" fill="#fff" />
    <path d="M20 16l6-4v12l-6-4z" fill="#fff" />
  </Svg>
)
const CloudIcon = () => (
  <Svg w={32} h={30}>
    <path d="M7 21a6 6 0 0 1 0-12c1-5 5-8 10-7 4 1 6 4 7 7a6 6 0 0 1 0 12z" fill="#f2f4f7" />
    <path d="M15 18h5l3 2-2 8-4 1-2-7z" fill="#2ca3dc" />
  </Svg>
)
const UpChevron = () => (
  <Svg w={18} h={12}><path d="M1 11l8-9 8 9" fill="none" stroke="#f2f2f2" strokeWidth="1.8" /></Svg>
)
const VolumeIcon = () => (
  <Svg w={24} h={22}>
    <path d="M1 8h4l6-6v18l-6-6H1z" fill="none" stroke="#eee" strokeWidth="1.3" />
    <path d="M14 7c2 2 2 6 0 8M17 4c3 4 3 10 0 14M20 2c4 5 4 13 0 18" fill="none" stroke="#eee" strokeWidth="1.3" />
  </Svg>
)
const TrayCam = () => (
  <Svg w={18} h={24}>
    <rect x="1" y="6" width="11" height="12" rx="2" fill="none" stroke="#eee" strokeWidth="1.5" />
    <path d="M12 10l5-2v8l-5-2z" fill="none" stroke="#eee" strokeWidth="1.3" />
    <path d="M3 2c2-1 6-1 8 0M3 22c2 1 6 1 8 0" stroke="#ccc" fill="none" />
  </Svg>
)
const BatteryIcon = () => (
  <Svg w={22} h={14}>
    <rect x="1" y="1" width="18" height="12" rx="1" fill="none" stroke="#eee" strokeWidth="1.5" />
    <rect x="3" y="3" width="11" height="8" fill="#eee" />
    <rect x="20" y="5" width="2" height="4" fill="#eee" />
  </Svg>
)
const NetworkIcon = () => (
  <Svg w={24} h={22}>
    <rect x="4" y="3" width="19" height="13" fill="none" stroke="#eee" strokeWidth="1.2" />
    <path d="M13 16v4M8 21h11" stroke="#eee" strokeWidth="1.2" />
    <rect x="1" y="1" width="6" height="7" fill="#1e1f20" stroke="#eee" />
  </Svg>
)
const NotifIcon = () => (
  <Svg w={22} h={24}>
    <path d="M0 0h22v18h-7l-4 5-4-5H0z" fill="#fff" />
    {lines(4, 18, [5, 9, 13], '#1e1f20', 1.5)}
  </Svg>
)
const SlashMic = ({ c, bg }: { c: string; bg: string }) => (
  <Svg w={28} h={24}>
    <rect x="10" y="1" width="9" height="14" rx="4.5" fill={c} />
    <path d="M7 10c0 10 15 10 15 0M14.5 17v5M10 22h9" fill="none" stroke={bg} strokeWidth="1.4" />
    <line x1="3" y1="23" x2="24" y2="1" stroke="#e23a3a" strokeWidth="1.6" />
  </Svg>
)
const SlashCam = () => (
  <Svg w={28} h={24}>
    <rect x="1" y="5" width="17" height="15" rx="2" fill="#a9a9a9" />
    <path d="M19 10l7-4v13l-7-4z" fill="#a9a9a9" />
    <line x1="2" y1="23" x2="24" y2="1" stroke="#e23a3a" strokeWidth="1.6" />
  </Svg>
)
const ParticipantsIcon = () => (
  <Svg w={26} h={22}>
    <circle cx="8" cy="6" r="5" fill="#b0b0b0" />
    <circle cx="19" cy="7" r="4" fill="#b0b0b0" />
    <path d="M0 21c0-7 4-9 8-9s8 2 8 9zM17 21c0-4-1-6-2-8 5-1 10 1 10 8z" fill="#b0b0b0" />
  </Svg>
)
const ShareIcon = () => (
  <Svg w={25} h={18}>
    <rect x="0" y="0" width="25" height="18" rx="2.5" fill="#1fd35a" />
    <path d="M12.5 3.5l-4 4.500h2.500v6h3V8H16.500z" fill="#06260f" />
  </Svg>
)
const ChatIcon = () => (
  <Svg w={22} h={22}>
    <path d="M3 1h16c1.500 0 2.500 1 2.500 2.500v10c0 1.500-1 2.500-2.500 2.500H8l-4 5v-5H3c-1.500 0-2.500-1-2.500-2.500v-10C.5 2 1.500 1 3 1z" fill="#b0b0b0" />
  </Svg>
)
const ReactionIcon = () => (
  <Svg w={24} h={24}>
    <circle cx="10" cy="14" r="9.500" fill="#b0b0b0" />
    <circle cx="7" cy="12" r="1.300" fill="#000" />
    <circle cx="13" cy="12" r="1.300" fill="#000" />
    <path d="M6 16c2 3 6 3 8 0" stroke="#000" fill="none" strokeWidth="1.300" />
    <path d="M20 0v7M16.500 3.500h7" stroke="#b0b0b0" strokeWidth="1.200" />
  </Svg>
)
const GearIcon = () => (
  <Svg w={22} h={22}>
    <circle cx="11" cy="11" r="6" fill="none" stroke="#b0b0b0" strokeWidth="4" />
    {[0, 45, 90, 135, 180, 225, 270, 315].map((a) => (
      <rect key={a} x="9" y="0" width="4" height="4" fill="#b0b0b0" transform={`rotate(${a} 11 11)`} />
    ))}
  </Svg>
)
const DotsIcon = () => (
  <Svg w={22} h={6}>
    {[3, 11, 19].map((x) => <circle key={x} cx={x} cy="3" r="1.700" fill="#c5c5c5" />)}
  </Svg>
)
const ShieldIcon = () => (
  <Svg w={14} h={16}>
    <path d="M7 0l7 2.500v5c0 4-3 7-7 8.500-4-1.500-7-4.500-7-8.500v-5z" fill="#22c55e" />
    <path d="M4 8l2.200 2.200L10.500 5.500" stroke="#063" fill="none" strokeWidth="1.500" />
  </Svg>
)
const FoxIcon = () => (
  <Svg w={22} h={24}>
    <circle cx="11" cy="13" r="10.500" fill="#f0632a" />
    <path d="M11 3c6 0 11 5 10 12-1-5-4-8-7-8z" fill="#ffb020" />
    <path d="M14 0c3 3 3 5 2 8l-4-2z" fill="#ffc72c" />
    <circle cx="11" cy="13" r="5.500" fill="#5b3ab8" />
    <circle cx="9" cy="12" r="2.500" fill="#3f8cf0" />
    <path d="M1 16c2 6 12 9 19 2-5 2-14 3-19-2z" fill="#e5346a" />
  </Svg>
)
const SmallMic = () => (
  <Svg w={14} h={20}>
    <rect x="4" y="1" width="6" height="11" rx="3" fill="#fff" />
    <path d="M2 8c0 7 10 7 10 0M7 14v4M3 18.500h8" stroke="#fff" fill="none" />
  </Svg>
)
const MutedTiny = () => (
  <Svg w={12} h={18}>
    <rect x="3" y="1" width="5" height="10" rx="2.500" fill="#173a24" />
    <path d="M1 8c0 6 9 6 9 0M5.500 13v3" stroke="#173a24" fill="none" />
    <line x1="0" y1="17" x2="11" y2="1" stroke="#173a24" strokeWidth="1.200" />
  </Svg>
)
const DownV = () => (
  <Svg w={13} h={8}><path d="M1 1l5.500 5.500L12 1" stroke="#fff" fill="none" strokeWidth="2" /></Svg>
)
const Chev = ({ d, c = '#555' }: { d: 'l' | 'r' | 'u' | 'v'; c?: string }) => {
  const p = { l: 'M7 1L2 6l5 5', r: 'M2 1l5 5-5 5', u: 'M1 7l5-5 5 5', v: 'M1 2l5 5 5-5' }[d]
  return <Svg w={12} h={12}><path d={p} fill="none" stroke={c} strokeWidth="1.800" /></Svg>
}
const ViewGrid = ({ kind }: { kind: number }) => (
  <Svg w={17} h={17}>
    {kind === 0 && (
      <>
        <rect x="1" y="1" width="15" height="15" fill="#fff" stroke="#555" />
        <rect x="3" y="3" width="4" height="11" fill="#777" />
        <rect x="8" y="3" width="6" height="7" fill="#555" />
      </>
    )}
    {kind === 1 && [1, 10].map((x) => [1, 10].map((y) => <rect key={`${x}${y}`} x={x} y={y} width="6" height="6" fill="none" stroke="#777" />))}
    {kind === 2 && <path d="M8.500 3C6 1 3 1 1 2v13c2-1 5-1 7.500 1 2.500-2 5.500-2 7.500-1V2c-2-1-5-1-7.500 1zv13" fill="none" stroke="#777" />}
    {kind === 3 && <path d="M1 2h15v3H1zM3 5h11v6H3zM8.500 11v4M5 15.500h7" fill="none" stroke="#777" />}
  </Svg>
)
const FitIcon = () => (
  <Svg w={20} h={24}>
    <rect x="0.500" y="0.500" width="19" height="23" rx="2" fill="#e5e6e9" stroke="#9a9c9f" />
    <path d="M4 5l4 4M16 5l-4 4M4 19l4-4M16 19l-4-4" stroke="#555" strokeWidth="1.500" />
  </Svg>
)
const SpellIcon = () => (
  <Svg w={26} h={26}>
    <path d="M1 17l11-6 12 5-11 8z" fill="#eef2fb" stroke="#4a66b8" strokeWidth="1.600" />
    <path d="M4 20l9 4 11-8v3l-11 7-9-4z" fill="#4a66b8" />
    <path d="M11 3l10 11M21 3L11 14" stroke="#e0442c" strokeWidth="2.600" />
  </Svg>
)
const IBeamSvg = () => (
  <Svg w={11} h={24}>
    <path d="M1 1c2 0 4 0 4.500 2 .5-2 2.500-2 4.500-2M5.500 3v18M1 23c2 0 4 0 4.500-2 .5 2 2.500 2 4.500 2M3 12h5" fill="none" stroke="#222" strokeWidth="1.300" />
  </Svg>
)
const ResizeDots = () => (
  <Svg w={12} h={12}>
    {[[9, 1], [5, 5], [9, 5], [1, 9], [5, 9], [9, 9]].map(([x, y]) => (
      <rect key={`${x}-${y}`} x={x} y={y} width="2" height="2" fill="#a5a5a5" />
    ))}
  </Svg>
)
const ViewGridSmall = () => (
  <Svg w={11} h={10}>
    <rect x="0" y="0" width="3" height="3" fill="#bbb" />
    <rect x="4" y="0" width="3" height="3" fill="#bbb" />
    <rect x="8" y="0" width="3" height="3" fill="#bbb" />
    <rect x="0" y="4" width="11" height="6" fill="#bbb" />
  </Svg>
)
const SaveIcon = () => (
  <Svg w={18} h={18}>
    <rect x="0" y="0" width="18" height="18" rx="1.500" fill="#56609c" />
    <rect x="4" y="1" width="10" height="7" fill="#eef0f8" />
    <rect x="4" y="11" width="9" height="7" fill="#b9bdd6" />
  </Svg>
)
const UndoIcon = ({ c, flip }: { c: string; flip?: boolean }) => (
  <Svg w={16} h={18}>
    <g transform={flip ? 'translate(16,0) scale(-1,1)' : undefined}>
      <path d="M3 5h6c4 0 6 3 5 7-.5 2-2 4-4 5" stroke={c} strokeWidth="2.800" fill="none" />
      <path d="M6 0v10L0 5z" fill={c} />
    </g>
  </Svg>
)
const QatMore = () => (
  <Svg w={10} h={14}>
    <path d="M1 3h8" stroke="#222" strokeWidth="1.200" />
    <path d="M1 7h8l-4 4z" fill="#222" />
  </Svg>
)
const RestoreIcon = () => (
  <Svg w={14} h={15}>
    <rect x="3.500" y="0.500" width="10" height="10" fill="none" stroke="#bbb" />
    <rect x="0.500" y="4.500" width="10" height="10" fill="#fff" stroke="#bbb" />
  </Svg>
)

/* ---------- data ---------- */

const NOTE_LINES = [
  'Assignment 3:',
  'Use web image stored on dockerhub kharatramesh/vadapaimages:vadapav to deploy application',
  'using deployment kind. Using HPA feature of k8s, setup autoscaling up to 5 replicas using metric called as CPU utilization threshold of 60%,',
  'access the application using Node Port service types.',
  '',
  'Assignment 4:',
  'Discover application pods based on regions, disk and application type and perform collective',
  ' delete operation on pods which are having SSD disk type, also observe self-healing and redundancy feature of k8s.',
  'Use web image stored on dockerhub kharatramesh/vadapaimages:vadapav to deploy application using deployment kind.',
  ' Using HPA feature of k8s, setup autoscaling up to 5 replicas using metric called as CPU utilization threshold of 60%,',
  'access the application using Node Port service types.',
]

const TABS: [string, number][] = [
  ['Insert', 80],
  ['Design', 82],
  ['Transitions', 116],
  ['Animations', 114],
  ['Slide Show', 116],
  ['Review', 82],
  ['View', 76],
]

/* the terminal text in the slide thumbnail: [width, gap above, highlighted] */
const THUMB_LINES: [number, number, boolean?][] = [
  [70, 1],
  [80, 3],
  [78, 3],
  [76, 3],
  [82, 3],
  [118, 3],
  [60, 2],
  [139, 2, true],
  [130, 2],
  [40, 5],
  [22, 6],
  [50, 3],
  [28, 6],
  [20, 2],
  [8, 27],
]

const App = () => (
  <Page>
    <GlobalStyle />
    <Stage>
      <Shared>
        <TitleBar>
          <Qat>
            <Slot $w={18}><SaveIcon /></Slot>
            <Slot $w={38}><UndoIcon c="#2e6fc4" /></Slot>
            <Slot $w={8}><Caret $c="#222" /></Slot>
            <Slot $w={34}><UndoIcon c="#b4b4b4" flip /></Slot>
            <Slot $w={22}><QatMore /></Slot>
          </Qat>
          <RedBar>kubernetives.pptx  -  Microsoft PowerPoint (Product Activa</RedBar>
          <WinBtns>
            <Minus c="#bbb" w={14} />
            <RestoreIcon />
            <Cross c="#bbb" s={14} sw={1.3} />
          </WinBtns>
        </TitleBar>

        <TabStrip>
          <FileTab>File</FileTab>
          <Tab $w={73} $active>Home</Tab>
          {TABS.map(([t, w]) => (
            <Tab key={t} $w={w}>{t}</Tab>
          ))}
          <ContextTab>Format</ContextTab>
        </TabStrip>

        <Ribbon>
          <Group $w={198}>
            <GroupBody $pl={6}>
              <BigBtn $w={46}>
                <BigIcon><PasteIcon /></BigIcon>
                Paste
                <Caret />
              </BigBtn>
              <SmallCol $ml={11}>
                <SmallRow><IconBox><CutIcon /></IconBox>Cut</SmallRow>
                <SmallRow><IconBox><CopyIcon /></IconBox>Copy<Caret /></SmallRow>
                <SmallRow><IconBox><PainterIcon /></IconBox>Format Painter</SmallRow>
              </SmallCol>
            </GroupBody>
            <GroupLabel>Clipboard</GroupLabel>
          </Group>

          <Group $w={166}>
            <GroupBody $pl={4}>
              <BigBtn $w={60}>
                <BigIcon><NewSlideIcon /></BigIcon>
                New
                <span>Slide<Caret /></span>
              </BigBtn>
              <SmallCol $ml={5}>
                <SmallRow><IconBox><LayoutIcon /></IconBox>Layout<Caret /></SmallRow>
                <SmallRow><IconBox><ResetIcon /></IconBox>Reset</SmallRow>
                <SmallRow><IconBox><SectionIcon /></IconBox>Section<Caret /></SmallRow>
              </SmallCol>
            </GroupBody>
            <GroupLabel>Slides</GroupLabel>
          </Group>

          <Group $w={313}>
            <GroupBody $pl={7}>
              <ToolStack>
                <ToolRow $h={45}>
                  <Combo $w={143}><Caret $c="#888" /></Combo>
                  <Combo $w={51}><ComboValue>12</ComboValue><Caret $c="#888" /></Combo>
                  <GrowA up />
                  <GrowA up={false} />
                  <Sep />
                  <Slot $w={56}><EraserIcon /></Slot>
                </ToolRow>
                <ToolRow $h={38}>
                  <Slot $w={32}><FontGlyph $b $size={17}>B</FontGlyph></Slot>
                  <Slot $w={32}><FontGlyph $i $size={17}>I</FontGlyph></Slot>
                  <Slot $w={32}><FontGlyph $u $size={16}>U</FontGlyph></Slot>
                  <Slot $w={32}><FontGlyph $b $size={16}>S</FontGlyph></Slot>
                  <Slot $w={32}><FontGlyph $s $size={14}>abc</FontGlyph></Slot>
                  <Slot $w={34}><FontGlyph $size={12}>AV</FontGlyph><Caret /></Slot>
                  <Slot $w={46}><FontGlyph $size={17}>Aa</FontGlyph><Caret /></Slot>
                  <Sep />
                  <Slot $w={56}><FontGlyph $b $size={20}>A</FontGlyph><Caret /></Slot>
                </ToolRow>
              </ToolStack>
            </GroupBody>
            <GroupLabel $pr={24}>Font</GroupLabel>
          </Group>

          <Group $w={411}>
            <GroupBody $pl={10}>
              <ToolStack>
                <ToolRow $h={45}>
                  <Slot $w={26}><BulletIcon /></Slot>
                  <Slot $w={18}><Caret /></Slot>
                  <Slot $w={26}><NumberIcon /></Slot>
                  <Slot $w={18}><Caret /></Slot>
                  <Sep />
                  <Slot $w={50}><IndentIcon out /></Slot>
                  <Slot $w={22}><IndentIcon /></Slot>
                  <Slot $w={8} />
                  <Sep />
                  <Slot $w={36}><SpacingIcon /></Slot>
                  <Caret />
                </ToolRow>
                <ToolRow $h={38}>
                  <Slot $w={27}><AlignIcon kind="l" /></Slot>
                  <Slot $w={32}><AlignIcon kind="c" /></Slot>
                  <Slot $w={33}><AlignIcon kind="r" /></Slot>
                  <Slot $w={28}><AlignIcon kind="j" /></Slot>
                  <Slot $w={10} />
                  <Sep />
                  <Slot $w={34}><ColumnsIcon /></Slot>
                  <Caret />
                </ToolRow>
              </ToolStack>
              <SmallCol $ml={4}>
                <SmallRow $off $gap={5}><IconBox><TextDirIcon /></IconBox>Text Direction<Caret $c="#bbb" /></SmallRow>
                <SmallRow $off $gap={5}><IconBox><AlignTextIcon /></IconBox>Align Text<Caret $c="#bbb" /></SmallRow>
                <SmallRow $off $gap={5}><IconBox><SmartArtIcon /></IconBox>Convert to SmartArt<Caret $c="#bbb" /></SmallRow>
              </SmallCol>
            </GroupBody>
            <GroupLabel $pr={24}>Paragraph</GroupLabel>
          </Group>

          <Group $w={465}>
            <GroupBody>
              <Gallery>
                <ShapeGrid>
                  {Array.from({ length: 18 }, (_, i) => <Shape key={i} i={i} />)}
                </ShapeGrid>
                <Spinner>
                  <SpinCell><Tri $d="up" $c="#c8c8c8" $s={4} /></SpinCell>
                  <SpinCell><Tri $d="down" $c="#666" $s={4} /></SpinCell>
                  <SpinCell><Tri $d="down" $c="#666" $s={4} /></SpinCell>
                </Spinner>
              </Gallery>
              <BigBtn $w={60}>
                <BigIcon><ArrangeIcon /></BigIcon>
                Arrange
                <Caret />
              </BigBtn>
              <BigBtn $w={60}>
                <BigIcon><QuickStyleIcon /></BigIcon>
                Quick
                <span>Styles<Caret /></span>
              </BigBtn>
              <SmallCol>
                <SmallRow $gap={2}><IconBox $w={25}><ShapeFillIcon /></IconBox>Shape Fill<Caret /></SmallRow>
                <SmallRow $gap={2}><IconBox $w={25}><ShapeOutlineIcon /></IconBox>Shape Outline<Caret /></SmallRow>
                <SmallRow $gap={2}><IconBox $w={25}><ShapeEffectsIcon /></IconBox>Shape Effects<Caret /></SmallRow>
              </SmallCol>
            </GroupBody>
            <GroupLabel $pr={22}>Drawing</GroupLabel>
          </Group>

          <Group $w={115}>
            <GroupBody $pl={10}>
              <SmallCol>
                <SmallRow $gap={5}><IconBox $w={23}><BinocularsIcon /></IconBox>Find</SmallRow>
                <SmallRow $gap={5}><IconBox $w={23}><ReplaceIcon /></IconBox>Replace<Caret /></SmallRow>
                <SmallRow $gap={5}><IconBox $w={23}><CursorIcon /></IconBox>Select<Caret /></SmallRow>
              </SmallCol>
            </GroupBody>
            <GroupLabel>Editing</GroupLabel>
          </Group>
        </Ribbon>

        <Body>
          <ThumbPane>
            <ThumbList>
              <ThumbHighlight>
                <Thumb>
                  {THUMB_LINES.map(([w, mt, bar], i) => (
                    <ThumbLine key={i} $w={w} $mt={mt} $bar={bar} />
                  ))}
                  <ThumbMark />
                </Thumb>
              </ThumbHighlight>
            </ThumbList>
            <ThumbScroll>
              <ThumbGrip><Grip $w={11} $h={10} /></ThumbGrip>
              <Tri $d="down" $s={6} />
            </ThumbScroll>
          </ThumbPane>
          <Splitter />
          <Main>
            <MainTop>
              <SlideCol>
                <SlideArea>
                  <SlideBlack>
                    <ApiText>apiGroup: <ApiQuote>""</ApiQuote></ApiText>
                    <SlideWatermark>Go to Settings to activate Windows.</SlideWatermark>
                  </SlideBlack>
                </SlideArea>
                <SlideHScroll>
                  <ArrowCell $w={23}><Tri $d="left" /></ArrowCell>
                  <HThumb><Grip $w={10} $h={11} /></HThumb>
                  <ArrowCell $w={132} $pl={106}><Tri $d="right" /></ArrowCell>
                </SlideHScroll>
              </SlideCol>
              <VBar>
                <VTopArrow><Tri $d="up" $c="#5e5e5e" /></VTopArrow>
                <VGrip><Grip $w={11} $h={10} /></VGrip>
                <VDownCell><Tri $d="down" $c="#767676" /></VDownCell>
                <VBarStack>
                  <Tri $d="up" $c="#222" $s={6} />
                  <Tri $d="up" $c="#222" $s={6} />
                  <Tri $d="down" $c="#222" $s={6} />
                  <Tri $d="down" $c="#222" $s={6} />
                </VBarStack>
              </VBar>
            </MainTop>
            <NotesRow>
              <Notes>
                Click to add notes
                <Activate>
                  <ActivateTitle>Activate Windows</ActivateTitle>
                  <ActivateSub>Go to Settings to activate Windows.</ActivateSub>
                </Activate>
              </Notes>
              <NotesBar>
                <Tri $d="up" $c="#a5a7ab" />
                <Tri $d="down" $c="#a5a7ab" />
              </NotesBar>
            </NotesRow>
          </Main>
        </Body>

        <PptStatus>
          <PptCell $w={113}>Slide 29 of 29</PptCell>
          <PptCell $w={127}>"Office Theme"</PptCell>
          <PptCell $w={47}><SpellIcon /></PptCell>
          <PptRight>
            <ViewBtn $on><ViewGrid kind={0} /></ViewBtn>
            <ViewBtn><ViewGrid kind={1} /></ViewBtn>
            <ViewBtn><ViewGrid kind={2} /></ViewBtn>
            <ViewBtn><ViewGrid kind={3} /></ViewBtn>
            <ZoomPct>61%</ZoomPct>
            <ZoomBtn>−</ZoomBtn>
            <ZoomTrack><ZoomTick /><ZoomKnob /></ZoomTrack>
            <ZoomBtn>+</ZoomBtn>
            <FitBtn><FitIcon /></FitBtn>
          </PptRight>
        </PptStatus>

        <Taskbar>
          <StartBtn><WinLogo /></StartBtn>
          <SearchBox>
            <SearchGlass />
            <SearchLabel>Type here to search</SearchLabel>
            <SearchArt><Elephant /></SearchArt>
          </SearchBox>
          <TaskSlot $w={64}><CircleO /></TaskSlot>
          <TaskSlot $w={64}><TaskView /></TaskSlot>
          <TaskSlot $w={72}><StoreIcon /></TaskSlot>
          <TaskSlot $w={62}><EdgeIcon /></TaskSlot>
          <TaskSlot $w={68}><MailIcon /></TaskSlot>
          <TaskSlot $w={64}><FolderIcon /></TaskSlot>
          <TaskSlot $w={68}><ChromeIcon /></TaskSlot>
          <TaskSlot $w={62}><PuttyIcon /></TaskSlot>
          <TaskSlot $w={68}><PptIcon /></TaskSlot>
          <TaskSlot $w={60} $active><NotepadTask /></TaskSlot>
          <TaskSlot $w={76}><ZoomApp /></TaskSlot>
          <Tray>
            <TaskSlot $w={44}><CloudIcon /></TaskSlot>
            <TaskSlot $w={50}><TempText>27°C</TempText></TaskSlot>
            <TaskSlot $w={46}><UpChevron /></TaskSlot>
            <TaskSlot $w={26}><VolumeIcon /></TaskSlot>
            <TaskSlot $w={32}><TrayCam /></TaskSlot>
            <TaskSlot $w={35}><BatteryIcon /></TaskSlot>
            <TaskSlot $w={30}><NetworkIcon /></TaskSlot>
            <TaskSlot $w={96}><Clock><span>18:18</span><span>12-08-2022</span></Clock></TaskSlot>
            <TaskSlot $w={52}><NotifIcon /></TaskSlot>
          </Tray>
        </Taskbar>

        <Notepad>
          <NoteTitle>
            <NotepadIcon s={22} />
            *Untitled - Notepad
            <NoteCtrls>
              <NoteCtrl><Minus c="#222" w={14} /></NoteCtrl>
              <NoteCtrl>
                <Svg w={13} h={14}><rect x="0.500" y="0.500" width="12" height="13" fill="none" stroke="#222" strokeWidth="1.300" /></Svg>
              </NoteCtrl>
              <NoteCtrl><Cross c="#222" s={15} sw={1.300} /></NoteCtrl>
            </NoteCtrls>
          </NoteTitle>
          <NoteMenu>
            <span>File</span>
            <span>Edit</span>
            <span>Format</span>
            <span>View</span>
            <span>Help</span>
          </NoteMenu>
          <EditorRow>
            <Editor>
              {NOTE_LINES.map((l, i) => (
                <Line key={i}>
                  {i === 5 && <TextCaret />}
                  {l}
                </Line>
              ))}
              <IBeam><IBeamSvg /></IBeam>
            </Editor>
            <NoteVBar>
              <Chev d="u" c="#b5b5b5" />
              <Chev d="v" c="#b5b5b5" />
            </NoteVBar>
          </EditorRow>
          <NoteHBar>
            <ArrowCell $w={23}><Chev d="l" /></ArrowCell>
            <NoteHThumb />
            <NoteHSpacer />
            <ArrowCell $w={12}><Chev d="r" /></ArrowCell>
          </NoteHBar>
          <NoteStatus>
            <NoteCell $w={173}>Ln 9, Col 1</NoteCell>
            <NoteCell $w={67} $sep>100%</NoteCell>
            <NoteCell $w={171} $sep>Windows (CRLF)</NoteCell>
            <NoteCell $w={100}>UTF-8</NoteCell>
            <SizeGrip><ResizeDots /></SizeGrip>
          </NoteStatus>
        </Notepad>
      </Shared>
    </Stage>

    <Toolbar>
      <MuteItem $w={90}>
        <ToolIcon><SlashMic c="#cfcfcf" bg="#cfcfcf" /></ToolIcon>
        <ToolLabel>Unmute</ToolLabel>
        <Chevron $r={7} />
      </MuteItem>
      <ToolItem $w={90}>
        <ToolIcon><SlashCam /></ToolIcon>
        <ToolLabel>Start Video</ToolLabel>
      </ToolItem>
      <CenterGroup>
        <ToolItem $w={92}>
          <ToolIcon><ParticipantsIcon /><ParticipantCount>55</ParticipantCount></ToolIcon>
          <ToolLabel>Participants</ToolLabel>
        </ToolItem>
        <ToolItem $w={94} $c="#22d35c">
          <ToolIcon><ShareIcon /></ToolIcon>
          <ToolLabel>Share Screen</ToolLabel>
        </ToolItem>
        <ToolItem $w={84}>
          <ToolIcon><ChatIcon /></ToolIcon>
          <ToolLabel>Chat</ToolLabel>
          <Chevron $r={9} />
        </ToolItem>
        <ToolItem $w={80}>
          <ToolIcon><ReactionIcon /></ToolIcon>
          <ToolLabel>Reactions</ToolLabel>
        </ToolItem>
        <ToolItem $w={78}>
          <ToolIcon><GearIcon /></ToolIcon>
          <ToolLabel>Settings</ToolLabel>
        </ToolItem>
        <ToolItem $w={80}>
          <ToolIcon><DotsIcon /></ToolIcon>
          <ToolLabel>More</ToolLabel>
        </ToolItem>
      </CenterGroup>
      <LeaveBtn>Leave</LeaveBtn>
    </Toolbar>

    <ShieldChip><ShieldIcon /></ShieldChip>
    <RecChip><RecDot $c="#f04545" />REC</RecChip>
    <RibbonCollapse />
    <HelpDot>?</HelpDot>
    <TalkingPanel>
      <TalkDivider />
      Talking:
    </TalkingPanel>
    <Banner>
      <BannerText>
        You are viewing Tineshwari Pathade's screen
        <MutedTiny />
        <RecTag><RecDot $c="#f06a6a" />REC</RecTag>
      </BannerText>
      <ViewOptions>View Options <DownV /></ViewOptions>
    </Banner>
    <CaptureBadge>
      <FoxCell><FoxIcon /></FoxCell>
      <MicCell><SmallMic /></MicCell>
    </CaptureBadge>
    <ViewChip><ViewGridSmall />View</ViewChip>
    <EdgeGlyph>a</EdgeGlyph>
  </Page>
)

export default App
